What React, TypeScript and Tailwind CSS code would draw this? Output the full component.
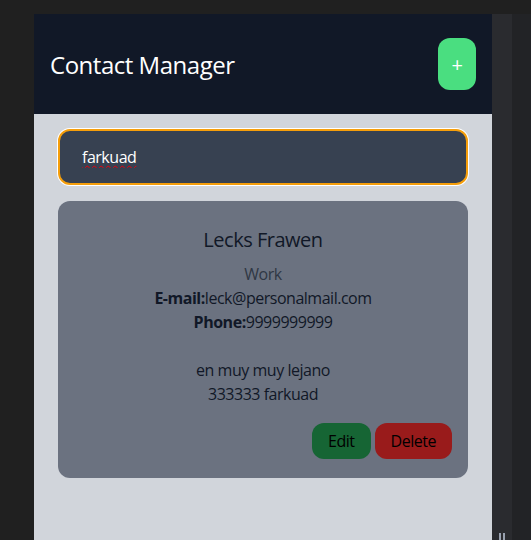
import React, { useState } from 'react';

const font = { fontFamily: '"Open Sans", "Noto Sans", sans-serif' };

interface Contact {
  name: string;
  tag: string;
  email: string;
  phone: string;
  address: string;
  zip: string;
}

const CONTACTS: Contact[] = [
  {
    name: 'Lecks Frawen',
    tag: 'Work',
    email: 'leck@personalmail.com',
    phone: '9999999999',
    address: 'en muy muy lejano',
    zip: '333333 farkuad',
  },
];

function ContactCard({ contact }: { contact: Contact }) {
  return (
    <div className="mt-4 rounded-xl bg-[#6b7280] px-4 pt-[25px] pb-[19px] text-center text-[#111827]">
      <h2 className="text-xl leading-7">{contact.name}</h2>
      <p className="mt-2 text-[#2f3744]">{contact.tag}</p>
      <p>
        <span className="font-bold">E-mail:</span>
        {contact.email}
      </p>
      <p>
        <span className="font-bold">Phone:</span>
        {contact.phone}
      </p>
      <p className="mt-6">{contact.address}</p>
      <p>{contact.zip}</p>
      <div className="mt-[17px] flex justify-end gap-1">
        <button className="h-9 rounded-xl bg-[#166534] px-4 text-black">Edit</button>
        <button className="h-9 rounded-xl bg-[#991b1b] px-4 text-black">Delete</button>
      </div>
    </div>
  );
}

export default function App() {
  const [query, setQuery] = useState('farkuad');

  return (
    <div className="flex h-[540px] overflow-hidden bg-[#202020] pl-[34px] pt-[14px] tracking-[-0.03em]" style={font}>
      <div className="w-[458px] shrink-0 bg-[#d1d5db]">
        <header className="flex h-[100px] items-center justify-between bg-[#111827] px-4">
          <h1 className="pt-0.5 text-2xl text-white">Contact Manager</h1>
          <button className="h-[52px] w-[38px] rounded-xl bg-[#4ade80] pt-0.5 text-xl text-white">+</button>
        </header>
        <div className="px-6 pt-[15px]">
          <input
            value={query}
            onChange={(e) => setQuery(e.target.value)}
            spellCheck
            className="h-14 w-full rounded-xl border-2 border-[#f59e0b] bg-[#374151] pl-[22px] pr-6 tracking-[-0.03em] text-white underline decoration-red-600 decoration-wavy decoration-1 underline-offset-2 outline-none ring-1 ring-white"
          />
          {CONTACTS.map((c) => (
            <ContactCard key={c.name} contact={c} />
          ))}
        </div>
      </div>
      <div className="relative w-5 shrink-0 bg-[#2a2b2f]">
        <div className="absolute bottom-0 left-[7px] flex gap-[2px]">
          <div className="h-[7px] w-[2px] bg-gray-400" />
          <div className="h-[7px] w-[2px] bg-gray-400" />
        </div>
      </div>
      <div className="flex-1 bg-[#222326]" />
    </div>
  );
}
